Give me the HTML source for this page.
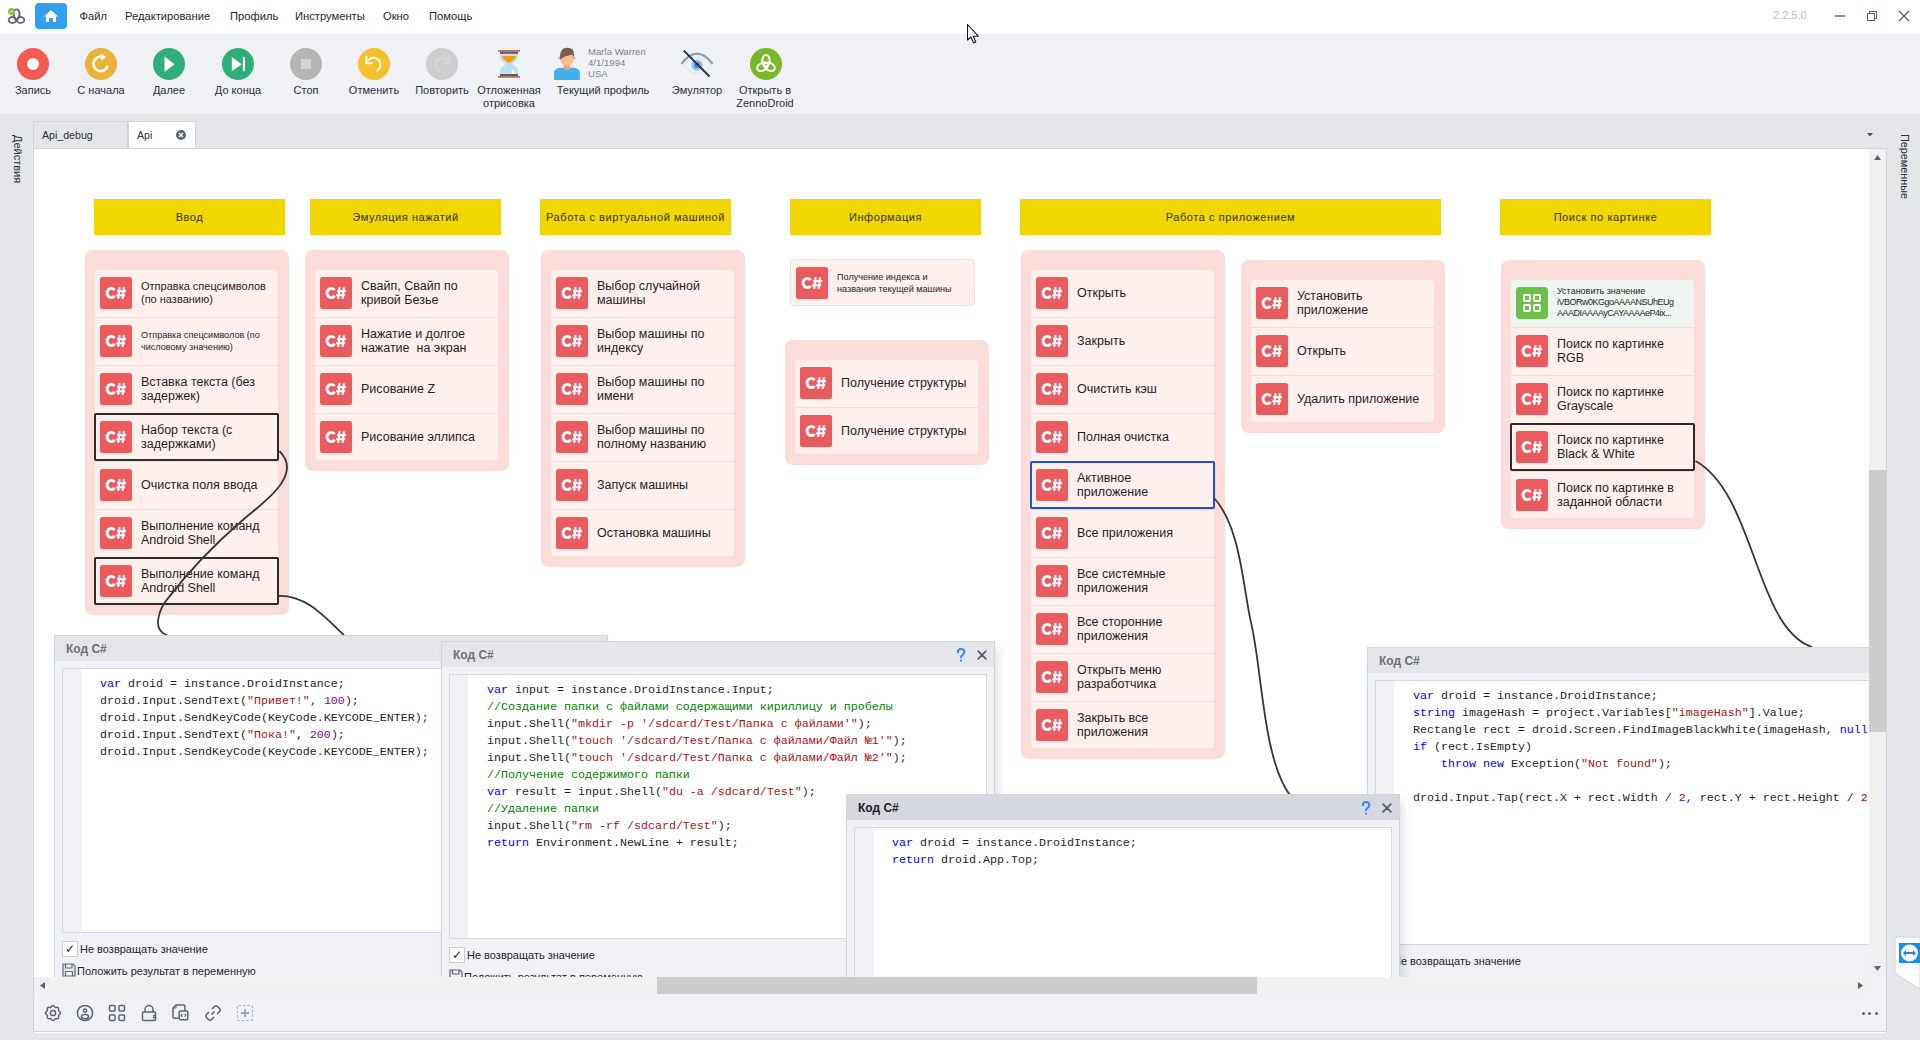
<!DOCTYPE html><html><head><meta charset="utf-8"><style>
*{margin:0;padding:0;box-sizing:border-box}
html,body{width:1920px;height:1040px;overflow:hidden}
body{position:relative;background:#e4e6ea;font-family:"Liberation Sans",sans-serif;color:#1f2126}
.a{position:absolute}
.t{position:absolute;white-space:pre;line-height:1}
.menu{font-size:11.2px;color:#1f2430;top:11px}
.tbl{font-size:11px;color:#2b2f38;text-align:center;white-space:pre;line-height:13px;position:absolute}
.circ{position:absolute;width:32px;height:32px;border-radius:50%}
.hdr{position:absolute;height:36px;background:#f2d600;font-size:11px;color:#36342a;text-align:center;line-height:36px;letter-spacing:0.57px}
.grp{position:absolute;background:#fadcd8;border-radius:8px}
.inr{position:absolute;background:#fff0ed;border-radius:4px}
.sep{position:absolute;height:1px;background:#f7d8d2}
.ic{position:absolute;width:32px;height:32px;border-radius:4px;background:#ea5a5b;color:#fff;font-weight:bold;font-size:17px;line-height:33px;text-align:center;letter-spacing:-1px}
.itx{position:absolute;font-size:12.5px;line-height:14px;color:#1e1f22;white-space:pre}
.sel{position:absolute;border:2px solid #2b2b2b;border-radius:2px}
.pnl{position:absolute;background:#f0f1f5;border:1px solid #d0d4db;box-shadow:4px 8px 8px rgba(0,0,0,0.11)}
.ph{position:absolute;left:0;top:0;right:0;height:25px;background:#e4e6ea}
.ptit{position:absolute;left:11px;top:7px;font-size:12px;font-weight:bold;color:#6a6f7a;white-space:pre;line-height:12px}
.code{position:absolute;background:#fff;border:1px solid #d3d7de;overflow:hidden}
.gut{position:absolute;left:0;top:0;bottom:0;width:18px;background:#f0f1f5}
.cl{position:absolute;font-family:"Liberation Mono",monospace;font-size:11.67px;line-height:17px;white-space:pre;color:#1e1e1e}
.kw{color:#0000ff}.st{color:#a31515}.cm{color:#008000}.nm{color:#8b008b}
.chk{position:absolute;width:16px;height:16px;border:1px solid #c9ced6;background:#fff;font-size:12px;line-height:14px;text-align:center;color:#2a2a2a}
.opt{position:absolute;font-size:11px;color:#1f2430;white-space:pre;line-height:12px}
</style></head><body>
<svg width="0" height="0" style="position:absolute"><defs><symbol id="cs" viewBox="0 0 32 32"><rect x="0" y="0" width="32" height="32" rx="2.5" fill="#eb5a5c"/><path d="M15.8 12.3 A5.7 6.1 0 1 0 15.8 19.7 L13.4 18.1 A2.75 3.05 0 1 1 13.4 13.9Z" fill="#fff"/><path d="M19.6 10.2 L18.2 21.8 M24 10.2 L22.6 21.8 M17 14.1 H26.1 M16.1 18.2 H25.2" stroke="#fff" stroke-width="2.1"/></symbol></defs></svg>
<div class="a" style="left:0;top:0;width:1920px;height:34px;background:#fff"></div>
<svg class="a" style="left:0;top:0" width="30" height="30" viewBox="0 0 30 30">
<g fill="none" stroke="#5f6b82" stroke-width="1.9"><path d="M16.5 9.5 Q19.5 9.5 19.5 14 Q19.5 18 16 21"/><path d="M16.5 9.5 Q13.5 9.5 13.5 14 Q13.5 18 17 21"/><ellipse cx="12.5" cy="20" rx="3.8" ry="3"/><ellipse cx="20.5" cy="20" rx="3.8" ry="3"/></g>
<circle cx="11.5" cy="11.5" r="3.5" fill="#8cc43c"/><path d="M9.8 12.3 L10.5 10.8 L11.5 12 L12.5 10.8 L13.2 12.3" fill="none" stroke="#d8f0b8" stroke-width="0.7"/></svg>
<div class="a" style="left:35px;top:3px;width:32px;height:26px;background:#339ff0;border-radius:4px"></div>
<svg class="a" style="left:43px;top:9px" width="16" height="14" viewBox="0 0 16 14"><path d="M8 1 L15 7.5 L13 7.5 L13 13 L10 13 L10 9.5 Q8 8 6 9.5 L6 13 L3 13 L3 7.5 L1 7.5 Z" fill="#fff"/></svg>
<div class="t menu" style="left:79.5px">Файл</div>
<div class="t menu" style="left:125px">Редактирование</div>
<div class="t menu" style="left:230px">Профиль</div>
<div class="t menu" style="left:295px">Инструменты</div>
<div class="t menu" style="left:383px">Окно</div>
<div class="t menu" style="left:429px">Помощь</div>
<div class="t" style="left:1773px;top:10px;font-size:11px;color:#b9bcc2">2.2.5.0</div>
<div class="a" style="left:1835px;top:15px;width:10px;height:1.6px;background:#8a92a3"></div>
<div class="a" style="left:1869px;top:11px;width:8px;height:8px;border:1.3px solid #5b6273"></div>
<div class="a" style="left:1867px;top:13px;width:8px;height:8px;border:1.3px solid #5b6273;background:#fff"></div>
<svg class="a" style="left:1898px;top:10px" width="12" height="12" viewBox="0 0 12 12"><path d="M1 1L11 11M11 1L1 11" stroke="#5b6273" stroke-width="1.4"/></svg>
<div class="a" style="left:0;top:34px;width:1920px;height:80px;background:#f0f1f5"></div>
<div class="circ" style="left:17px;top:48px;background:#f25a52"></div>
<div class="circ" style="left:27px;top:58px;width:12px;height:12px;background:#fff"></div>
<div class="tbl" style="left:-12.0px;top:84px;width:90px">Запись</div>
<div class="circ" style="left:85px;top:48px;background:#ebb33a"></div>
<svg class="a" style="left:89px;top:52px" width="24" height="24" viewBox="0 0 24 24"><path d="M12 4.6 A7.25 7.25 0 1 0 18.75 13.7" fill="none" stroke="#fff" stroke-width="2.6"/><path d="M12.1 1.4 L16.8 5.1 L12.1 8.9Z" fill="#fff"/></svg>
<div class="tbl" style="left:56.0px;top:84px;width:90px">С начала</div>
<div class="circ" style="left:153px;top:48px;background:#2fae7a"></div>
<svg class="a" style="left:161px;top:56px" width="16" height="16" viewBox="0 0 16 16"><path d="M3.8 1.1 L13.2 8.2 L3.8 15.2Z" fill="#fff" stroke="#fff" stroke-width="0.6" stroke-linejoin="round"/></svg>
<div class="tbl" style="left:124.0px;top:84px;width:90px">Далее</div>
<div class="circ" style="left:222px;top:48px;background:#2fae7a"></div>
<svg class="a" style="left:230px;top:56px" width="16" height="16" viewBox="0 0 16 16"><path d="M1.8 1.1 L11.7 8.2 L1.8 15.2Z" fill="#fff"/><rect x="12.9" y="1.1" width="2.1" height="14.1" fill="#fff"/></svg>
<div class="tbl" style="left:193.0px;top:84px;width:90px">До конца</div>
<div class="circ" style="left:290px;top:48px;background:#b5b5b5"></div>
<div class="a" style="left:301px;top:59px;width:10px;height:10px;background:#d3d3d3"></div>
<div class="tbl" style="left:261.0px;top:84px;width:90px">Стоп</div>
<div class="circ" style="left:358px;top:48px;background:#f5c02e"></div>
<svg class="a" style="left:362px;top:52px" width="24" height="24" viewBox="0 0 24 24"><path d="M6.55 7.85 A7 7 0 1 1 15 18.86" fill="none" stroke="#fff" stroke-width="1.9" stroke-linecap="round"/><path d="M4.5 4.2 V11.2 H10.5" fill="none" stroke="#fff" stroke-width="2"/></svg>
<div class="tbl" style="left:329.0px;top:84px;width:90px">Отменить</div>
<div class="circ" style="left:426px;top:48px;background:#cecece"></div>
<svg class="a" style="left:430px;top:52px" width="24" height="24" viewBox="0 0 24 24"><path d="M17.45 7.85 A7 7 0 1 0 9 18.86" fill="none" stroke="#dadada" stroke-width="1.9" stroke-linecap="round"/><path d="M19.5 4.2 V11.2 H13.5" fill="none" stroke="#dadada" stroke-width="2"/></svg>
<div class="tbl" style="left:397.0px;top:84px;width:90px">Повторить</div>
<svg class="a" style="left:498px;top:49px" width="22" height="30" viewBox="0 0 22 30">
<path d="M2 4.8 H20 V8 Q20 11.5 14.7 14.2 V15.8 Q20 18.5 20 22 V25 H2 V22 Q2 18.5 7.3 15.8 V14.2 Q2 11.5 2 8Z" fill="#bde0f8"/>
<path d="M4.1 7 H18 Q17 11 11 14 Q5 11 4.1 7Z" fill="#ff9a00"/>
<path d="M13.2 25 Q14.3 21.5 15.4 19.8 Q16.6 22 17.2 25Z" fill="#fff" opacity="0.85"/>
<rect x="0" y="1" width="22" height="1.8" fill="#a87a66"/><rect x="2" y="2.7" width="18" height="2.1" fill="#76554a"/>
<rect x="2" y="25" width="18" height="2" fill="#76554a"/><rect x="0" y="27" width="22" height="1.8" fill="#a87a66"/>
</svg>
<div class="tbl" style="left:464.0px;top:84px;width:90px">Отложенная
отрисовка</div>
<svg class="a" style="left:553px;top:47px" width="28" height="34" viewBox="0 0 28 34">
<path d="M1 33 L1 26.5 Q1 21.2 7 20.8 L20.9 20.8 Q26.9 21.2 26.9 26.5 L26.9 33Z" fill="#3db3ec"/>
<path d="M10.8 17 H17.1 V21.8 Q14 25.2 10.8 21.8Z" fill="#f0a46a"/>
<circle cx="6.6" cy="10.9" r="1.5" fill="#f7b686"/><circle cx="21.2" cy="10.9" r="1.5" fill="#f7b686"/>
<ellipse cx="13.9" cy="11.8" rx="6.8" ry="7.1" fill="#fbbd8c"/>
<path d="M7 12.5 Q6.3 0.8 14 0.8 Q19.5 0.8 20.6 4.5 Q21.3 8 20.8 11.5 Q20.3 7.5 18.3 7.8 Q12.5 8.6 7 12.5Z" fill="#7a5d51"/>
</svg>
<div class="t" style="left:588px;top:47px;font-size:9.6px;line-height:10.8px;color:#7d818d">Marla Warren
4/1/1994
USA</div>
<div class="tbl" style="left:548.0px;top:84px;width:110px">Текущий профиль</div>
<svg class="a" style="left:680px;top:50px" width="33" height="28" viewBox="0 0 33 28">
<path d="M1.4 13.8 Q17 -6.7 32.6 13.8" fill="none" stroke="#8d9eaa" stroke-width="2.2"/>
<path d="M3.5 15 Q17 -0.4 30.5 15 Q17 32 3.5 15Z" fill="#eef3f9" stroke="#d5dee8" stroke-width="0.8"/>
<circle cx="17" cy="15.1" r="5.6" fill="#93c3ef"/><circle cx="17" cy="15.1" r="2.8" fill="#3a7fd5"/>
<path d="M3.75 0.6 L29.5 26.5" stroke="#2c3646" stroke-width="2"/>
</svg>
<div class="tbl" style="left:652.0px;top:84px;width:90px">Эмулятор</div>
<div class="circ" style="left:750px;top:48px;background:#78b82a"></div>
<svg class="a" style="left:754px;top:52px" width="24" height="24" viewBox="0 0 24 24"><g fill="none" stroke="#fff" stroke-width="2"><ellipse cx="12" cy="8.7" rx="3.7" ry="5.8"/><ellipse cx="8.54" cy="14.7" rx="3.7" ry="5.8" transform="rotate(60 8.54 14.7)"/><ellipse cx="15.46" cy="14.7" rx="3.7" ry="5.8" transform="rotate(-60 15.46 14.7)"/></g></svg>
<div class="tbl" style="left:720.0px;top:84px;width:90px">Открыть в
ZennoDroid</div>
<div class="t" style="left:12px;top:135px;font-size:11px;color:#2b2f38;writing-mode:vertical-rl">Действия</div>
<div class="t" style="left:1899px;top:134px;font-size:10.8px;color:#2b2f38;writing-mode:vertical-rl">Переменные</div>
<div class="a" style="left:33px;top:121px;width:95px;height:28px;background:#e4e6ea;border:1px solid #cfd4dc;border-bottom:none"></div>
<div class="t" style="left:42px;top:130px;font-size:10.6px;color:#2b2f38">Api_debug</div>
<div class="a" style="left:128px;top:121px;width:68px;height:28px;background:#fff;border:1px solid #cfd4dc;border-bottom:none"></div>
<div class="t" style="left:137px;top:130px;font-size:10.6px;color:#2b2f38">Api</div>
<svg class="a" style="left:176px;top:130px" width="10" height="10" viewBox="0 0 10 10"><circle cx="5" cy="5" r="5" fill="#5d6270"/><path d="M3 3L7 7M7 3L3 7" stroke="#fff" stroke-width="1.4"/></svg>
<svg class="a" style="left:1867px;top:132.5px" width="6" height="4" viewBox="0 0 6 4"><path d="M0 0H6L3 3.6Z" fill="#4a5060"/></svg>
<div class="a" style="left:33px;top:148px;width:1854px;height:885px;background:#fff;border-left:1px solid #cfd4dc;border-top:1px solid #cfd4dc"></div>
<div class="hdr" style="left:94px;top:199px;width:191px">Ввод</div>
<div class="hdr" style="left:310px;top:199px;width:191px">Эмуляция нажатий</div>
<div class="hdr" style="left:540px;top:199px;width:191px">Работа с виртуальной машиной</div>
<div class="hdr" style="left:790px;top:199px;width:191px">Информация</div>
<div class="hdr" style="left:1020px;top:199px;width:421px">Работа с приложением</div>
<div class="hdr" style="left:1500px;top:199px;width:211px">Поиск по картинке</div>
<div class="grp" style="left:85px;top:250px;width:204px;height:365px"></div>
<div class="inr" style="left:95px;top:270px;width:183px;height:334px"></div>
<svg class="a" style="left:100px;top:277px" width="32" height="32"><use href="#cs"/></svg>
<div class="itx" style="left:141px;top:279.5px;font-size:11px;line-height:13px">Отправка спецсимволов
(по названию)</div>
<div class="sep" style="left:95px;top:317px;width:183px"></div>
<svg class="a" style="left:100px;top:325px" width="32" height="32"><use href="#cs"/></svg>
<div class="itx" style="left:141px;top:328.5px;font-size:9.1px;line-height:12px">Отправка спецсимволов (по
числовому значению)</div>
<div class="sep" style="left:95px;top:365px;width:183px"></div>
<svg class="a" style="left:100px;top:373px" width="32" height="32"><use href="#cs"/></svg>
<div class="itx" style="left:141px;top:374.5px;font-size:12.5px;line-height:14px">Вставка текста (без
задержек)</div>
<div class="sep" style="left:95px;top:413px;width:183px"></div>
<svg class="a" style="left:100px;top:421px" width="32" height="32"><use href="#cs"/></svg>
<div class="itx" style="left:141px;top:422.5px;font-size:12.5px;line-height:14px">Набор текста (с
задержками)</div>
<div class="sep" style="left:95px;top:461px;width:183px"></div>
<svg class="a" style="left:100px;top:469px" width="32" height="32"><use href="#cs"/></svg>
<div class="itx" style="left:141px;top:477.5px;font-size:12.5px;line-height:14px">Очистка поля ввода</div>
<div class="sep" style="left:95px;top:509px;width:183px"></div>
<svg class="a" style="left:100px;top:517px" width="32" height="32"><use href="#cs"/></svg>
<div class="itx" style="left:141px;top:518.5px;font-size:12.5px;line-height:14px">Выполнение команд
Android Shell</div>
<div class="sep" style="left:95px;top:557px;width:183px"></div>
<svg class="a" style="left:100px;top:565px" width="32" height="32"><use href="#cs"/></svg>
<div class="itx" style="left:141px;top:566.5px;font-size:12.5px;line-height:14px">Выполнение команд
Android Shell</div>
<div class="grp" style="left:305px;top:250px;width:204px;height:221px"></div>
<div class="inr" style="left:315px;top:270px;width:183px;height:190px"></div>
<svg class="a" style="left:320px;top:277px" width="32" height="32"><use href="#cs"/></svg>
<div class="itx" style="left:361px;top:278.5px;font-size:12.5px;line-height:14px">Свайп, Свайп по
кривой Безье</div>
<div class="sep" style="left:315px;top:317px;width:183px"></div>
<svg class="a" style="left:320px;top:325px" width="32" height="32"><use href="#cs"/></svg>
<div class="itx" style="left:361px;top:326.5px;font-size:12.5px;line-height:14px">Нажатие и долгое
нажатие  на экран</div>
<div class="sep" style="left:315px;top:365px;width:183px"></div>
<svg class="a" style="left:320px;top:373px" width="32" height="32"><use href="#cs"/></svg>
<div class="itx" style="left:361px;top:381.5px;font-size:12.5px;line-height:14px">Рисование Z</div>
<div class="sep" style="left:315px;top:413px;width:183px"></div>
<svg class="a" style="left:320px;top:421px" width="32" height="32"><use href="#cs"/></svg>
<div class="itx" style="left:361px;top:429.5px;font-size:12.5px;line-height:14px">Рисование эллипса</div>
<div class="grp" style="left:541px;top:250px;width:204px;height:317px"></div>
<div class="inr" style="left:551px;top:270px;width:183px;height:286px"></div>
<svg class="a" style="left:556px;top:277px" width="32" height="32"><use href="#cs"/></svg>
<div class="itx" style="left:597px;top:278.5px;font-size:12.5px;line-height:14px">Выбор случайной
машины</div>
<div class="sep" style="left:551px;top:317px;width:183px"></div>
<svg class="a" style="left:556px;top:325px" width="32" height="32"><use href="#cs"/></svg>
<div class="itx" style="left:597px;top:326.5px;font-size:12.5px;line-height:14px">Выбор машины по
индексу</div>
<div class="sep" style="left:551px;top:365px;width:183px"></div>
<svg class="a" style="left:556px;top:373px" width="32" height="32"><use href="#cs"/></svg>
<div class="itx" style="left:597px;top:374.5px;font-size:12.5px;line-height:14px">Выбор машины по
имени</div>
<div class="sep" style="left:551px;top:413px;width:183px"></div>
<svg class="a" style="left:556px;top:421px" width="32" height="32"><use href="#cs"/></svg>
<div class="itx" style="left:597px;top:422.5px;font-size:12.5px;line-height:14px">Выбор машины по
полному названию</div>
<div class="sep" style="left:551px;top:461px;width:183px"></div>
<svg class="a" style="left:556px;top:469px" width="32" height="32"><use href="#cs"/></svg>
<div class="itx" style="left:597px;top:477.5px;font-size:12.5px;line-height:14px">Запуск машины</div>
<div class="sep" style="left:551px;top:509px;width:183px"></div>
<svg class="a" style="left:556px;top:517px" width="32" height="32"><use href="#cs"/></svg>
<div class="itx" style="left:597px;top:525.5px;font-size:12.5px;line-height:14px">Остановка машины</div>
<div class="a" style="left:790px;top:259px;width:185px;height:47px;background:#fff0ed;border:1px solid #e3e3ef;border-radius:4px"></div>
<svg class="a" style="left:796px;top:267px" width="32" height="32"><use href="#cs"/></svg>
<div class="itx" style="left:837px;top:271px;font-size:9.1px;line-height:12px">Получение индекса и
названия текущей машины</div>
<div class="grp" style="left:785px;top:340px;width:204px;height:125px"></div>
<div class="inr" style="left:795px;top:360px;width:183px;height:94px"></div>
<svg class="a" style="left:800px;top:367px" width="32" height="32"><use href="#cs"/></svg>
<div class="itx" style="left:841px;top:375.5px;font-size:12.5px;line-height:14px">Получение структуры</div>
<div class="sep" style="left:795px;top:407px;width:183px"></div>
<svg class="a" style="left:800px;top:415px" width="32" height="32"><use href="#cs"/></svg>
<div class="itx" style="left:841px;top:423.5px;font-size:12.5px;line-height:14px">Получение структуры</div>
<div class="grp" style="left:1021px;top:250px;width:204px;height:509px"></div>
<div class="inr" style="left:1031px;top:270px;width:183px;height:478px"></div>
<svg class="a" style="left:1036px;top:277px" width="32" height="32"><use href="#cs"/></svg>
<div class="itx" style="left:1077px;top:285.5px;font-size:12.5px;line-height:14px">Открыть</div>
<div class="sep" style="left:1031px;top:317px;width:183px"></div>
<svg class="a" style="left:1036px;top:325px" width="32" height="32"><use href="#cs"/></svg>
<div class="itx" style="left:1077px;top:333.5px;font-size:12.5px;line-height:14px">Закрыть</div>
<div class="sep" style="left:1031px;top:365px;width:183px"></div>
<svg class="a" style="left:1036px;top:373px" width="32" height="32"><use href="#cs"/></svg>
<div class="itx" style="left:1077px;top:381.5px;font-size:12.5px;line-height:14px">Очистить кэш</div>
<div class="sep" style="left:1031px;top:413px;width:183px"></div>
<svg class="a" style="left:1036px;top:421px" width="32" height="32"><use href="#cs"/></svg>
<div class="itx" style="left:1077px;top:429.5px;font-size:12.5px;line-height:14px">Полная очистка</div>
<div class="sep" style="left:1031px;top:461px;width:183px"></div>
<svg class="a" style="left:1036px;top:469px" width="32" height="32"><use href="#cs"/></svg>
<div class="itx" style="left:1077px;top:470.5px;font-size:12.5px;line-height:14px">Активное
приложение</div>
<div class="sep" style="left:1031px;top:509px;width:183px"></div>
<svg class="a" style="left:1036px;top:517px" width="32" height="32"><use href="#cs"/></svg>
<div class="itx" style="left:1077px;top:525.5px;font-size:12.5px;line-height:14px">Все приложения</div>
<div class="sep" style="left:1031px;top:557px;width:183px"></div>
<svg class="a" style="left:1036px;top:565px" width="32" height="32"><use href="#cs"/></svg>
<div class="itx" style="left:1077px;top:566.5px;font-size:12.5px;line-height:14px">Все системные
приложения</div>
<div class="sep" style="left:1031px;top:605px;width:183px"></div>
<svg class="a" style="left:1036px;top:613px" width="32" height="32"><use href="#cs"/></svg>
<div class="itx" style="left:1077px;top:614.5px;font-size:12.5px;line-height:14px">Все сторонние
приложения</div>
<div class="sep" style="left:1031px;top:653px;width:183px"></div>
<svg class="a" style="left:1036px;top:661px" width="32" height="32"><use href="#cs"/></svg>
<div class="itx" style="left:1077px;top:662.5px;font-size:12.5px;line-height:14px">Открыть меню
разработчика</div>
<div class="sep" style="left:1031px;top:701px;width:183px"></div>
<svg class="a" style="left:1036px;top:709px" width="32" height="32"><use href="#cs"/></svg>
<div class="itx" style="left:1077px;top:710.5px;font-size:12.5px;line-height:14px">Закрыть все
приложения</div>
<div class="grp" style="left:1241px;top:260px;width:204px;height:173px"></div>
<div class="inr" style="left:1251px;top:280px;width:183px;height:142px"></div>
<svg class="a" style="left:1256px;top:287px" width="32" height="32"><use href="#cs"/></svg>
<div class="itx" style="left:1297px;top:288.5px;font-size:12.5px;line-height:14px">Установить
приложение</div>
<div class="sep" style="left:1251px;top:327px;width:183px"></div>
<svg class="a" style="left:1256px;top:335px" width="32" height="32"><use href="#cs"/></svg>
<div class="itx" style="left:1297px;top:343.5px;font-size:12.5px;line-height:14px">Открыть</div>
<div class="sep" style="left:1251px;top:375px;width:183px"></div>
<svg class="a" style="left:1256px;top:383px" width="32" height="32"><use href="#cs"/></svg>
<div class="itx" style="left:1297px;top:391.5px;font-size:12.5px;line-height:14px">Удалить приложение</div>
<div class="grp" style="left:1501px;top:260px;width:204px;height:269px"></div>
<div class="inr" style="left:1511px;top:280px;width:183px;height:238px"></div>
<div class="a" style="left:1511px;top:280px;width:183px;height:47px;background:#eef5f0;border-radius:5px 5px 0 0"></div>
<div class="ic" style="left:1516px;top:287px;background:#6cc04a"></div>
<svg class="a" style="left:1523px;top:294px" width="18" height="18" viewBox="0 0 18 18"><g fill="none" stroke="#fff" stroke-width="2"><rect x="1" y="1" width="6" height="6" rx="1"/><rect x="11" y="1" width="6" height="6" rx="1"/><rect x="1" y="11" width="6" height="6" rx="1"/><rect x="11" y="11" width="6" height="6" rx="1"/></g></svg>
<div class="itx" style="left:1557px;top:286.0px;font-size:9px;line-height:11px">Установить значение
<span style="letter-spacing:-0.5px">iVBORw0KGgoAAAANSUhEUg
AAADIAAAAyCAYAAAAeP4ix...</span></div>
<div class="sep" style="left:1511px;top:327px;width:183px"></div>
<svg class="a" style="left:1516px;top:335px" width="32" height="32"><use href="#cs"/></svg>
<div class="itx" style="left:1557px;top:336.5px;font-size:12.5px;line-height:14px">Поиск по картинке
RGB</div>
<div class="sep" style="left:1511px;top:375px;width:183px"></div>
<svg class="a" style="left:1516px;top:383px" width="32" height="32"><use href="#cs"/></svg>
<div class="itx" style="left:1557px;top:384.5px;font-size:12.5px;line-height:14px">Поиск по картинке
Grayscale</div>
<div class="sep" style="left:1511px;top:423px;width:183px"></div>
<svg class="a" style="left:1516px;top:431px" width="32" height="32"><use href="#cs"/></svg>
<div class="itx" style="left:1557px;top:432.5px;font-size:12.5px;line-height:14px">Поиск по картинке
Black & White</div>
<div class="sep" style="left:1511px;top:471px;width:183px"></div>
<svg class="a" style="left:1516px;top:479px" width="32" height="32"><use href="#cs"/></svg>
<div class="itx" style="left:1557px;top:480.5px;font-size:12.5px;line-height:14px">Поиск по картинке в
заданной области</div>
<div class="sel" style="left:94px;top:413px;width:185px;height:48px;border-color:#2b2b2b"></div>
<div class="sel" style="left:94px;top:557px;width:185px;height:48px;border-color:#2b2b2b"></div>
<div class="sel" style="left:1030px;top:461px;width:185px;height:48px;border-color:#1d4fd8"></div>
<div class="sel" style="left:1510px;top:423px;width:185px;height:48px;border-color:#2b2b2b"></div>
<svg class="a" style="left:0;top:0" width="1920" height="1040" viewBox="0 0 1920 1040"><g fill="none" stroke="#363636" stroke-width="1.8"><path d="M279.5 451.2 C305.6 477.0 256.4 507.1 241.9 520.8 C214.4 544.5 189.1 570.9 166.9 599.6 C161.1 606.6 151.2 627.8 165 634.2 L168 636"/><path d="M279 595.8 C306.7 595.2 325.1 617.5 342.9 634.2 L345 637"/><path d="M1214.5 498.5 C1240.3 527.2 1242.8 585.1 1250.7 621.1 C1261.9 666.3 1262.6 756.5 1288.8 793.4 L1291 796"/><path d="M1695.5 461 C1754.3 493.2 1755.3 625.2 1810.2 646.3 L1813 648"/></g></svg>
<div class="a" style="left:34px;top:149px;width:1835px;height:828px;overflow:hidden">
<div class="pnl" style="left:20px;top:486px;width:554px;height:400px">
<div class="ph" style="background:#e4e6ea"></div><div class="ptit" style="color:#6b707b">Код C#</div>
<svg class="a" style="left:514px;top:6px" width="10" height="14" viewBox="0 0 10 14"><path d="M1.9 4.2 Q1.9 1.1 5 1.1 Q8.3 1.1 8.3 4 Q8.3 5.9 6.4 7.1 Q5 8 5 9.3" fill="none" stroke="#3f86f2" stroke-width="2" stroke-linecap="round"/><circle cx="5" cy="12.7" r="1.15" fill="#3f86f2"/></svg>
<svg class="a" style="left:535px;top:8px" width="10" height="10" viewBox="0 0 10 10"><path d="M1.1 1.1L8.9 8.9M8.9 1.1L1.1 8.9" stroke="#545b68" stroke-width="1.6" stroke-linecap="round"/></svg>
<div class="code" style="left:7px;top:32px;width:538px;height:265px"><div class="gut"></div>
<div class="cl" style="left:37px;top:7px"><span class="kw">var</span> droid = instance.DroidInstance;</div>
<div class="cl" style="left:37px;top:24px">droid.Input.SendText(<span class="st">"Привет!"</span>, <span class="nm">100</span>);</div>
<div class="cl" style="left:37px;top:41px">droid.Input.SendKeyCode(KeyCode.KEYCODE_ENTER);</div>
<div class="cl" style="left:37px;top:58px">droid.Input.SendText(<span class="st">"Пока!"</span>, <span class="nm">200</span>);</div>
<div class="cl" style="left:37px;top:75px">droid.Input.SendKeyCode(KeyCode.KEYCODE_ENTER);</div>
</div>
<div class="chk" style="left:7px;top:305px">&#10003;</div>
<div class="opt" style="left:25px;top:307px">Не возвращать значение</div>
<svg class="a" style="left:7px;top:327px" width="14" height="14" viewBox="0 0 14 14"><g fill="none" stroke="#5d6574" stroke-width="1.2"><path d="M1 1H11L13 3V13H1Z"/><path d="M3.5 1V5H10V1"/><path d="M3.5 13V8.5H10.5V13"/></g></svg>
<div class="opt" style="left:22px;top:329px">Положить результат в переменную</div>

</div>
<div class="pnl" style="left:407px;top:492px;width:554px;height:400px">
<div class="ph" style="background:#e4e6ea"></div><div class="ptit" style="color:#6b707b">Код C#</div>
<svg class="a" style="left:514px;top:6px" width="10" height="14" viewBox="0 0 10 14"><path d="M1.9 4.2 Q1.9 1.1 5 1.1 Q8.3 1.1 8.3 4 Q8.3 5.9 6.4 7.1 Q5 8 5 9.3" fill="none" stroke="#3f86f2" stroke-width="2" stroke-linecap="round"/><circle cx="5" cy="12.7" r="1.15" fill="#3f86f2"/></svg>
<svg class="a" style="left:535px;top:8px" width="10" height="10" viewBox="0 0 10 10"><path d="M1.1 1.1L8.9 8.9M8.9 1.1L1.1 8.9" stroke="#545b68" stroke-width="1.6" stroke-linecap="round"/></svg>
<div class="code" style="left:7px;top:32px;width:538px;height:265px"><div class="gut"></div>
<div class="cl" style="left:37px;top:7px"><span class="kw">var</span> input = instance.DroidInstance.Input;</div>
<div class="cl" style="left:37px;top:24px"><span class="cm">//Создание папки с файлами содержащими кириллицу и пробелы</span></div>
<div class="cl" style="left:37px;top:41px">input.Shell(<span class="st">"mkdir -p '/sdcard/Test/Папка с файлами'"</span>);</div>
<div class="cl" style="left:37px;top:58px">input.Shell(<span class="st">"touch '/sdcard/Test/Папка с файлами/Файл №1'"</span>);</div>
<div class="cl" style="left:37px;top:75px">input.Shell(<span class="st">"touch '/sdcard/Test/Папка с файлами/Файл №2'"</span>);</div>
<div class="cl" style="left:37px;top:92px"><span class="cm">//Получение содержимого папки</span></div>
<div class="cl" style="left:37px;top:109px"><span class="kw">var</span> result = input.Shell(<span class="st">"du -a /sdcard/Test"</span>);</div>
<div class="cl" style="left:37px;top:126px"><span class="cm">//Удаление папки</span></div>
<div class="cl" style="left:37px;top:143px">input.Shell(<span class="st">"rm -rf /sdcard/Test"</span>);</div>
<div class="cl" style="left:37px;top:160px"><span class="kw">return</span> Environment.NewLine + result;</div>
</div>
<div class="chk" style="left:7px;top:305px">&#10003;</div>
<div class="opt" style="left:25px;top:307px">Не возвращать значение</div>
<svg class="a" style="left:7px;top:327px" width="14" height="14" viewBox="0 0 14 14"><g fill="none" stroke="#5d6574" stroke-width="1.2"><path d="M1 1H11L13 3V13H1Z"/><path d="M3.5 1V5H10V1"/><path d="M3.5 13V8.5H10.5V13"/></g></svg>
<div class="opt" style="left:22px;top:329px">Положить результат в переменную</div>

</div>
<div class="pnl" style="left:1333px;top:498px;width:554px;height:400px">
<div class="ph" style="background:#e4e6ea"></div><div class="ptit" style="color:#6b707b">Код C#</div>
<svg class="a" style="left:514px;top:6px" width="10" height="14" viewBox="0 0 10 14"><path d="M1.9 4.2 Q1.9 1.1 5 1.1 Q8.3 1.1 8.3 4 Q8.3 5.9 6.4 7.1 Q5 8 5 9.3" fill="none" stroke="#3f86f2" stroke-width="2" stroke-linecap="round"/><circle cx="5" cy="12.7" r="1.15" fill="#3f86f2"/></svg>
<svg class="a" style="left:535px;top:8px" width="10" height="10" viewBox="0 0 10 10"><path d="M1.1 1.1L8.9 8.9M8.9 1.1L1.1 8.9" stroke="#545b68" stroke-width="1.6" stroke-linecap="round"/></svg>
<div class="code" style="left:7px;top:32px;width:538px;height:265px"><div class="gut"></div>
<div class="cl" style="left:37px;top:7px"><span class="kw">var</span> droid = instance.DroidInstance;</div>
<div class="cl" style="left:37px;top:24px"><span class="kw">string</span> imageHash = project.Variables[<span class="st">"imageHash"</span>].Value;</div>
<div class="cl" style="left:37px;top:41px">Rectangle rect = droid.Screen.FindImageBlackWhite(imageHash, <span class="kw">null</span>);</div>
<div class="cl" style="left:37px;top:58px"><span class="kw">if</span> (rect.IsEmpty)</div>
<div class="cl" style="left:37px;top:75px">    <span class="kw">throw</span> <span class="kw">new</span> Exception(<span class="st">"Not found"</span>);</div>
<div class="cl" style="left:37px;top:92px"></div>
<div class="cl" style="left:37px;top:109px">droid.Input.Tap(rect.X + rect.Width / <span class="nm">2</span>, rect.Y + rect.Height / <span class="nm">2</span>);</div>
</div>
<div class="chk" style="left:7px;top:305px">&#10003;</div>
<div class="opt" style="left:25px;top:307px">Не возвращать значение</div>
<svg class="a" style="left:7px;top:327px" width="14" height="14" viewBox="0 0 14 14"><g fill="none" stroke="#5d6574" stroke-width="1.2"><path d="M1 1H11L13 3V13H1Z"/><path d="M3.5 1V5H10V1"/><path d="M3.5 13V8.5H10.5V13"/></g></svg>
<div class="opt" style="left:22px;top:329px">Положить результат в переменную</div>

</div>
<div class="pnl" style="left:812px;top:645px;width:554px;height:400px">
<div class="ph" style="background:#d5d8de"></div><div class="ptit" style="color:#1f2126">Код C#</div>
<svg class="a" style="left:514px;top:6px" width="10" height="14" viewBox="0 0 10 14"><path d="M1.9 4.2 Q1.9 1.1 5 1.1 Q8.3 1.1 8.3 4 Q8.3 5.9 6.4 7.1 Q5 8 5 9.3" fill="none" stroke="#3f86f2" stroke-width="2" stroke-linecap="round"/><circle cx="5" cy="12.7" r="1.15" fill="#3f86f2"/></svg>
<svg class="a" style="left:535px;top:8px" width="10" height="10" viewBox="0 0 10 10"><path d="M1.1 1.1L8.9 8.9M8.9 1.1L1.1 8.9" stroke="#545b68" stroke-width="1.6" stroke-linecap="round"/></svg>
<div class="code" style="left:7px;top:32px;width:538px;height:265px"><div class="gut"></div>
<div class="cl" style="left:37px;top:7px"><span class="kw">var</span> droid = instance.DroidInstance;</div>
<div class="cl" style="left:37px;top:24px"><span class="kw">return</span> droid.App.Top;</div>
</div>
<div class="chk" style="left:7px;top:305px">&#10003;</div>
<div class="opt" style="left:25px;top:307px">Не возвращать значение</div>
<svg class="a" style="left:7px;top:327px" width="14" height="14" viewBox="0 0 14 14"><g fill="none" stroke="#5d6574" stroke-width="1.2"><path d="M1 1H11L13 3V13H1Z"/><path d="M3.5 1V5H10V1"/><path d="M3.5 13V8.5H10.5V13"/></g></svg>
<div class="opt" style="left:22px;top:329px">Положить результат в переменную</div>

</div>
</div>
<div class="a" style="left:34px;top:977px;width:1835px;height:17px;background:#f0f0f0"></div>
<div class="a" style="left:657px;top:977px;width:600px;height:17px;background:#cdcdcd"></div>
<svg class="a" style="left:40px;top:982px" width="5" height="7" viewBox="0 0 5 7"><path d="M5 0V7L0 3.5Z" fill="#5b6270"/></svg>
<svg class="a" style="left:1858px;top:982px" width="5" height="7" viewBox="0 0 5 7"><path d="M0 0V7L5 3.5Z" fill="#5b6270"/></svg>
<div class="a" style="left:1869px;top:149px;width:17px;height:828px;background:#f0f0f0"></div>
<div class="a" style="left:1869px;top:470px;width:17px;height:262px;background:#cdcdcd"></div>
<svg class="a" style="left:1874px;top:155px" width="7" height="5" viewBox="0 0 7 5"><path d="M0 5H7L3.5 0Z" fill="#5b6270"/></svg>
<svg class="a" style="left:1874px;top:966px" width="7" height="5" viewBox="0 0 7 5"><path d="M0 0H7L3.5 5Z" fill="#5b6270"/></svg>
<div class="a" style="left:1869px;top:977px;width:17px;height:17px;background:#f0f1f5"></div>
<div class="a" style="left:34px;top:994px;width:1852px;height:38px;background:#f0f1f5;border-bottom:1px solid #cfd4dc"></div>
<div class="a" style="left:1886px;top:149px;width:1px;height:884px;background:#cfd4dc"></div>
<svg class="a" style="left:44px;top:1004px" width="18" height="18" viewBox="0 0 18 18"><g fill="none" stroke="#5d6574" stroke-width="1.5" stroke-linejoin="round"><path d="M16.45 9.00 L16.35 9.48 L16.06 9.93 L15.67 10.33 L15.25 10.68 L14.91 11.00 L14.68 11.35 L14.59 11.76 L14.61 12.24 L14.65 12.78 L14.65 13.34 L14.54 13.85 L14.27 14.27 L13.85 14.54 L13.34 14.65 L12.78 14.65 L12.24 14.61 L11.76 14.59 L11.35 14.68 L11.00 14.91 L10.68 15.25 L10.33 15.67 L9.93 16.06 L9.48 16.35 L9.00 16.45 L8.52 16.35 L8.07 16.06 L7.67 15.67 L7.32 15.25 L7.00 14.91 L6.65 14.68 L6.24 14.59 L5.76 14.61 L5.22 14.65 L4.66 14.65 L4.15 14.54 L3.73 14.27 L3.46 13.85 L3.35 13.34 L3.35 12.78 L3.39 12.24 L3.41 11.76 L3.32 11.35 L3.09 11.00 L2.75 10.68 L2.33 10.33 L1.94 9.93 L1.65 9.48 L1.55 9.00 L1.65 8.52 L1.94 8.07 L2.33 7.67 L2.75 7.32 L3.09 7.00 L3.32 6.65 L3.41 6.24 L3.39 5.76 L3.35 5.22 L3.35 4.66 L3.46 4.15 L3.73 3.73 L4.15 3.46 L4.66 3.35 L5.22 3.35 L5.76 3.39 L6.24 3.41 L6.65 3.32 L7.00 3.09 L7.32 2.75 L7.67 2.33 L8.07 1.94 L8.52 1.65 L9.00 1.55 L9.48 1.65 L9.93 1.94 L10.33 2.33 L10.68 2.75 L11.00 3.09 L11.35 3.32 L11.76 3.41 L12.24 3.39 L12.78 3.35 L13.34 3.35 L13.85 3.46 L14.27 3.73 L14.54 4.15 L14.65 4.66 L14.65 5.22 L14.61 5.76 L14.59 6.24 L14.68 6.65 L14.91 7.00 L15.25 7.32 L15.67 7.67 L16.06 8.07 L16.35 8.52Z"/><circle cx="9" cy="9" r="2.6"/></g></svg>
<svg class="a" style="left:76px;top:1004px" width="18" height="18" viewBox="0 0 18 18"><g fill="none" stroke="#5d6574" stroke-width="1.5"><circle cx="9" cy="9" r="7.6"/><circle cx="9" cy="6.6" r="1.7"/><ellipse cx="9" cy="12.6" rx="3.6" ry="2.2"/></g></svg>
<svg class="a" style="left:108px;top:1004px" width="18" height="18" viewBox="0 0 18 18"><g fill="none" stroke="#5d6574" stroke-width="1.5"><rect x="1.5" y="1.5" width="5.5" height="5.5" rx="1"/><rect x="11" y="1.5" width="5.5" height="5.5" rx="1"/><rect x="1.5" y="11" width="5.5" height="5.5" rx="1"/><rect x="11" y="11" width="5.5" height="5.5" rx="1"/></g></svg>
<svg class="a" style="left:140px;top:1004px" width="18" height="18" viewBox="0 0 18 18"><g fill="none" stroke="#5d6574" stroke-width="1.5"><path d="M5 8 V5.5 A4 4 0 0 1 13 5.5 V8"/><rect x="2.5" y="8" width="13" height="8.5" rx="1"/><path d="M13 11.5 H15.5 M13 13.5 H15.5"/></g></svg>
<svg class="a" style="left:172px;top:1004px" width="18" height="18" viewBox="0 0 18 18"><g fill="none" stroke="#5d6574" stroke-width="1.5"><path d="M6.5 14.3 H2 Q1 14.3 1 13.3 V4 L4 1 H11.9 Q12.9 1 12.9 2 V6.9"/><path d="M1 4 H4 V1" stroke-width="1"/><rect x="7.2" y="6.9" width="8.6" height="8.8" rx="1.2" fill="#f0f1f5"/><path d="M10.2 9.8 L9.2 11.3 L10.2 12.8 M12.8 9.8 L13.8 11.3 L12.8 12.8" stroke-width="1.2"/></g></svg>
<svg class="a" style="left:204px;top:1004px" width="18" height="18" viewBox="0 0 18 18"><g fill="none" stroke="#5d6574" stroke-width="1.6"><path d="M7.5 10.5 L10.5 7.5"/><path d="M8 5 L10.5 2.5 Q12 1 13.5 2.5 L15.5 4.5 Q17 6 15.5 7.5 L13 10"/><path d="M10 13 L7.5 15.5 Q6 17 4.5 15.5 L2.5 13.5 Q1 12 2.5 10.5 L5 8"/></g></svg>
<svg class="a" style="left:236px;top:1004px" width="18" height="18" viewBox="0 0 18 18"><g fill="none" stroke="#a8b3c4" stroke-width="1.2"><rect x="1.5" y="1.5" width="15" height="15" rx="1" stroke-dasharray="2.5 2"/><path d="M9 5V13M5 9H13" stroke="#98a4b8" stroke-width="1.8"/></g></svg>
<div class="a" style="left:1861.5px;top:1012px;width:3px;height:3px;border-radius:50%;background:#5d6574"></div>
<div class="a" style="left:1868.0px;top:1012px;width:3px;height:3px;border-radius:50%;background:#5d6574"></div>
<div class="a" style="left:1874.5px;top:1012px;width:3px;height:3px;border-radius:50%;background:#5d6574"></div>
<svg class="a" style="left:1894px;top:936px" width="26" height="54" viewBox="0 0 26 54"><path d="M4 1 H26 V53 L2 38 Q1 37 1 35 V4 Q1 1 4 1Z" fill="#fff" stroke="#d0d4da" stroke-width="1"/>
<rect x="5" y="7" width="21" height="20" fill="#1a8cf0"/><circle cx="15.5" cy="17" r="8.5" fill="#fff"/><path d="M9 17 L12 14 V16 H19 V14 L22 17 L19 20 V18 H12 V20Z" fill="#2d7fe0"/></svg>
<svg class="a" style="left:966px;top:23px" width="16" height="22" viewBox="0 0 16 22"><path d="M1.5 1.5 L1.5 17 L4.8 14 L7.6 19.8 L9.8 18.9 L7.2 13.2 L12.3 13.2Z" fill="#fff" stroke="#15161a" stroke-width="1.1" stroke-linejoin="round"/></svg>
</body></html>
